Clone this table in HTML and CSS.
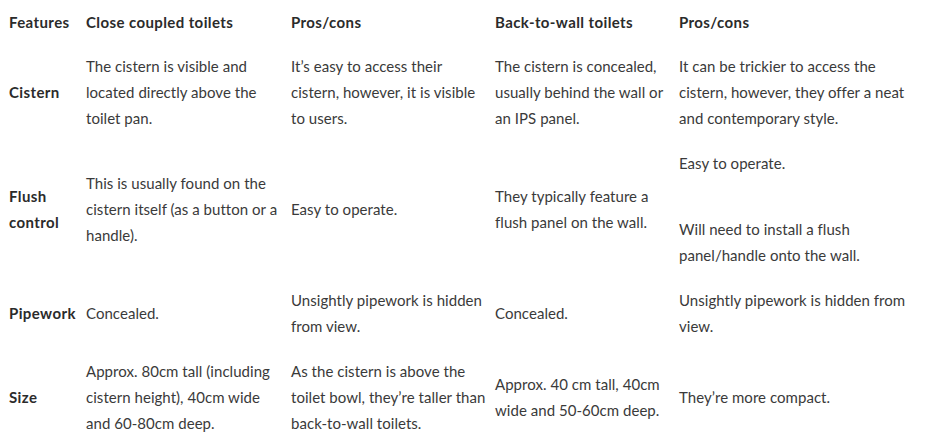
FILE: index.html
```html
<!DOCTYPE html>
<html lang="en">
<head>
<meta charset="utf-8">
<title>Toilet comparison</title>
<link rel="stylesheet" href="styles.css">
</head>
<body>
<table class="compare">
  <colgroup>
    <col class="c1"><col class="c2"><col class="c3"><col class="c4"><col class="c5">
  </colgroup>
  <thead>
    <tr>
      <th>Features</th>
      <th>Close coupled toilets</th>
      <th>Pros/cons</th>
      <th>Back-to-wall toilets</th>
      <th>Pros/cons</th>
    </tr>
  </thead>
  <tbody>
    <tr>
      <th>Cistern</th>
      <td>The cistern is visible and located directly above the toilet pan.</td>
      <td>It’s easy to access their cistern, however, it is visible to users.</td>
      <td>The cistern is concealed, usually behind the wall or an IPS panel.</td>
      <td>It can be trickier to access the cistern, however, they offer a neat and contemporary style.</td>
    </tr>
    <tr>
      <th>Flush control</th>
      <td>This is usually found on the cistern itself (as a button or a handle).</td>
      <td>Easy to operate.</td>
      <td>They typically feature a flush panel on the wall.</td>
      <td><p>Easy to operate.</p><p>Will need to install a flush panel/handle onto the wall.</p></td>
    </tr>
    <tr>
      <th>Pipework</th>
      <td>Concealed.</td>
      <td>Unsightly pipework is hidden from view.</td>
      <td>Concealed.</td>
      <td>Unsightly pipework is hidden from view.</td>
    </tr>
    <tr>
      <th>Size</th>
      <td>Approx. 80cm tall (including cistern height), 40cm wide and 60-80cm deep.</td>
      <td>As the cistern is above the toilet bowl, they’re taller than back-to-wall toilets.</td>
      <td>Approx. 40 cm tall, 40cm wide and 50-60cm deep.</td>
      <td>They’re more compact.</td>
    </tr>
  </tbody>
</table>
</body>
</html>
```

FILE: styles.css
```css
html, body {
  margin: 0;
  padding: 0;
  background: #ffffff;
}
body {
  font-family: Lato, "Open Sans", "Liberation Sans", sans-serif;
  font-size: 15px;
  line-height: 26px;
  color: #3a3a3a;
}
.compare {
  border-collapse: collapse;
  table-layout: fixed;
  width: 921px;
  margin-left: 5px;
}
.c1 { width: 77px; }
.c2 { width: 205px; }
.c3 { width: 204px; }
.c4 { width: 184px; }
.c5 { width: 251px; }
.compare th,
.compare td {
  padding: 9px 4px 10px;
  vertical-align: middle;
  text-align: left;
}
.compare thead th {
  padding-bottom: 9px;
}
.compare tbody tr:last-child td,
.compare tbody tr:last-child th {
  padding-bottom: 9px;
}
.compare th {
  font-weight: 700;
  color: #2b2b2b;
  letter-spacing: 0.4px;
}
.compare td {
  font-weight: 400;
  letter-spacing: 0.04px;
}
.compare p {
  margin: 0;
}
.compare p + p {
  margin-top: 40px;
}
```
